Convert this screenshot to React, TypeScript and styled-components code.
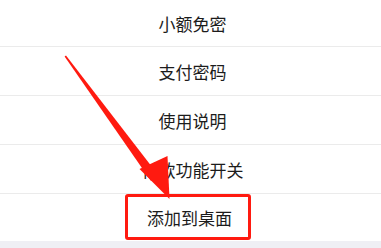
import styled, { createGlobalStyle } from 'styled-components';

const GlobalStyle = createGlobalStyle`
  html, body {
    margin: 0;
    padding: 0;
    background: #efeff4;
  }
  body {
    font-family: "Noto Sans CJK SC", "Noto Sans", sans-serif;
  }
`;

const items = ['小额免密', '支付密码', '使用说明', '付款功能开关'];

export default function App() {
  return (
    <Page>
      <GlobalStyle />
      <List>
        {items.map((label, index) => (
          <Row key={label} $first={index === 0}>
            <Label>{label}</Label>
          </Row>
        ))}
        <Row $last>
          <Highlight>
            <Label>添加到桌面</Label>
          </Highlight>
        </Row>
      </List>
      <Arrow width="381" height="248" viewBox="0 0 381 248">
        <path d="M64.6 56.4 L66 55.4 L159 176 L151 181 Z" fill="#ff1a10" />
        <path d="M139.5 169 L169.5 199 L167.5 156 Z" fill="#ff1a10" />
      </Arrow>
    </Page>
  );
}

const Page = styled.div`
  position: relative;
  width: 381px;
  height: 248px;
  overflow: hidden;
  background: #efeff4;
`;

const List = styled.div`
  background: #ffffff;
  display: flex;
  flex-direction: column;
`;

const Row = styled.div<{ $first?: boolean; $last?: boolean }>`
  height: ${(p) => (p.$first ? '46px' : p.$last ? '47px' : '48px')};
  border-bottom: ${(p) => (p.$last ? 'none' : '1px solid #ebebeb')};
  display: flex;
  align-items: center;
  justify-content: center;
  padding-left: 4px;
`;

const Label = styled.span`
  font-size: 17px;
  color: #1c1c1c;
`;

const Highlight = styled.div`
  box-sizing: border-box;
  width: 126px;
  height: 46px;
  margin-left: -10px;
  margin-top: -1px;
  border: 3px solid #ff1a10;
  border-radius: 3px;
  display: flex;
  align-items: center;
  justify-content: center;
  padding-left: 4px;
`;

const Arrow = styled.svg`
  position: absolute;
  left: 0;
  top: 0;
  pointer-events: none;
`;
